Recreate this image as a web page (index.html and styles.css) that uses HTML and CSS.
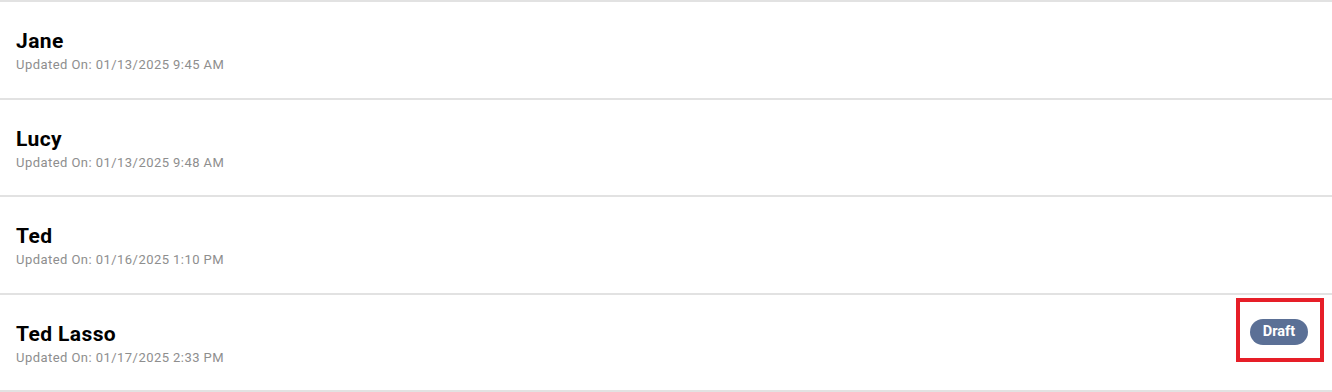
FILE: index.html
```html
<!DOCTYPE html>
<html lang="en">
<head>
  <meta charset="UTF-8">
  <meta name="viewport" content="width=device-width, initial-scale=1.0">
  <title>Forms</title>
  <link rel="stylesheet" href="styles.css">
</head>
<body>

  <ul class="form-list">
    <li class="form-row">
      <div class="form-info">
        <div class="form-name">Jane</div>
        <div class="form-date">Updated On: 01/13/2025 9:45 AM</div>
      </div>
    </li>
    <li class="form-row">
      <div class="form-info">
        <div class="form-name">Lucy</div>
        <div class="form-date">Updated On: 01/13/2025 9:48 AM</div>
      </div>
    </li>
    <li class="form-row">
      <div class="form-info">
        <div class="form-name">Ted</div>
        <div class="form-date">Updated On: 01/16/2025 1:10 PM</div>
      </div>
    </li>
    <li class="form-row">
      <div class="form-info">
        <div class="form-name">Ted Lasso</div>
        <div class="form-date">Updated On: 01/17/2025 2:33 PM</div>
      </div>
      <!-- highlighted status -->
      <div class="highlight">
        <span class="badge">Draft</span>
      </div>
    </li>
  </ul>

</body>
</html>
```

FILE: styles.css
```css
body {
  font-family: Roboto, "Liberation Sans", Arial, sans-serif;
  background: #ffffff;
  margin: 0;
  padding: 0;
}
.form-list {
  list-style: none;
  margin: 0;
  padding: 0;
  border-top: 2px solid #e2e2e2;
}
.form-row {
  display: flex;
  justify-content: space-between;
  align-items: center;
  height: 95.5px;
  padding: 0 8px 0 16px;
  border-bottom: 2px solid #e2e2e2;
}
.form-info {
  padding-top: 3px;
}
.form-name {
  font-size: 21px;
  font-weight: bold;
  letter-spacing: 0.4px;
  color: #000;
  line-height: 24px;
}
.form-date {
  font-size: 13px;
  letter-spacing: 0.45px;
  color: #8e8e8e;
  line-height: 16px;
  margin-top: 4px;
}
.highlight {
  align-self: flex-start;
  margin-top: 3px;
  border: 4px solid #e61e28;
  padding: 17px 12px 13px 10px;
}
.badge {
  display: inline-block;
  background: #5b7096;
  color: #fff;
  font-size: 14.5px;
  font-weight: bold;
  line-height: 26px;
  height: 26px;
  width: 58px;
  text-align: center;
  border-radius: 13px;
}
```
